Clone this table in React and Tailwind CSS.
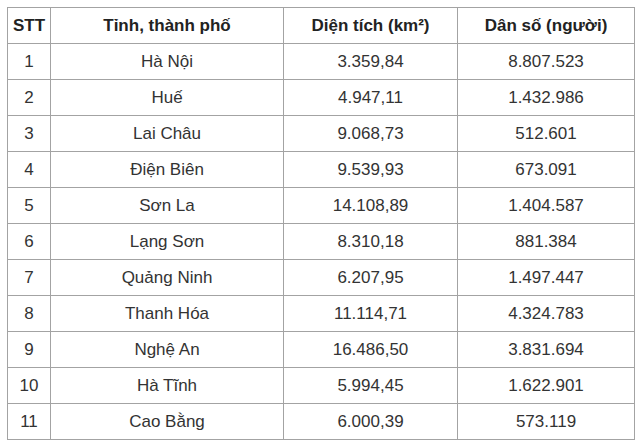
import React from "react";

const rows = [
  ["1", "Hà Nội", "3.359,84", "8.807.523"],
  ["2", "Huế", "4.947,11", "1.432.986"],
  ["3", "Lai Châu", "9.068,73", "512.601"],
  ["4", "Điện Biên", "9.539,93", "673.091"],
  ["5", "Sơn La", "14.108,89", "1.404.587"],
  ["6", "Lạng Sơn", "8.310,18", "881.384"],
  ["7", "Quảng Ninh", "6.207,95", "1.497.447"],
  ["8", "Thanh Hóa", "11.114,71", "4.324.783"],
  ["9", "Nghệ An", "16.486,50", "3.831.694"],
  ["10", "Hà Tĩnh", "5.994,45", "1.622.901"],
  ["11", "Cao Bằng", "6.000,39", "573.119"],
];

export default function App() {
  return (
    <div className="w-[640px] h-[444px] bg-white pt-[7px] pl-[7px] overflow-hidden" style={{ fontFamily: '"Liberation Sans", Arial, sans-serif' }}>
      <table className="border-collapse table-fixed w-[628px] text-[17px] text-[#333]">
        <colgroup>
          <col className="w-[43px]" />
          <col className="w-[233px]" />
          <col className="w-[174px]" />
          <col className="w-[177px]" />
        </colgroup>
        <thead>
          <tr className="h-[36px]">
            {["STT", "Tỉnh, thành phố", "Diện tích (km²)", "Dân số (người)"].map((h) => (
              <th key={h} className="border border-[#a3a3a3] font-bold text-center p-0 text-[#222]">{h}</th>
            ))}
          </tr>
        </thead>
        <tbody>
          {rows.map((r) => (
            <tr key={r[0]} className="h-[36px]">
              {r.map((c, i) => (
                <td key={i} className="border border-[#a3a3a3] text-center p-0">{c}</td>
              ))}
            </tr>
          ))}
        </tbody>
      </table>
    </div>
  );
}
